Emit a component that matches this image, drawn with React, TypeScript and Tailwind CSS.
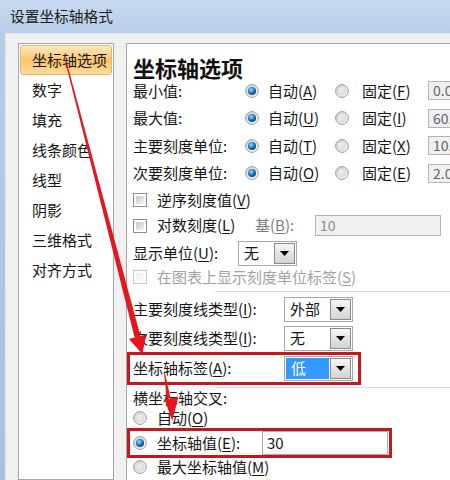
import type { ReactNode } from 'react';

const U = ({ children }: { children: ReactNode }) => (
  <span className="underline underline-offset-[2px] decoration-1">{children}</span>
);

const Key = ({ text, k, colon }: { text: string; k: string; colon?: boolean }) => (
  <span>
    {text}(<U>{k}</U>){colon ? ':' : ''}
  </span>
);

function Radio({ on }: { on?: boolean }) {
  return (
    <svg width="14" height="14" viewBox="0 0 14 14" className="shrink-0">
      <defs>
        <linearGradient id="rg-off" x1="0" y1="0" x2="1" y2="1">
          <stop offset="0" stopColor="#cfcfcf" />
          <stop offset="1" stopColor="#fbfbfb" />
        </linearGradient>
        <linearGradient id="rg-in" x1="0" y1="0" x2="1" y2="1">
          <stop offset="0" stopColor="#f4f4f4" />
          <stop offset="1" stopColor="#dadada" />
        </linearGradient>
        <radialGradient id="rg-ball" cx="0.4" cy="0.35" r="0.7">
          <stop offset="0" stopColor="#a6e0ff" />
          <stop offset="0.45" stopColor="#2b8ad0" />
          <stop offset="1" stopColor="#0a3563" />
        </radialGradient>
      </defs>
      <circle cx="7" cy="7" r="6.4" fill="url(#rg-off)" stroke="#9b9b9b" strokeWidth="1" />
      {on ? (
        <circle cx="7" cy="7" r="4" fill="url(#rg-ball)" />
      ) : (
        <circle cx="7" cy="7" r="4" fill="url(#rg-in)" stroke="#d2d2d2" strokeWidth="0.6" />
      )}
    </svg>
  );
}

function Check({ off }: { off?: boolean }) {
  return (
    <div
      className={
        off
          ? 'w-[14px] h-[14px] shrink-0 border border-[#c9c9c9] bg-white p-[2px]'
          : 'w-[14px] h-[14px] shrink-0 border border-[#8e8f8f] bg-white p-[2px]'
      }
    >
      <div
        className={
          off
            ? 'w-full h-full bg-gradient-to-br from-[#ececec] to-[#fafafa]'
            : 'w-full h-full bg-gradient-to-br from-[#c9c9c9] to-[#f3f3f3]'
        }
      />
    </div>
  );
}

function Drop({ text, hi, wide }: { text: string; hi?: boolean; wide?: boolean }) {
  return (
    <div
      className={
        (wide ? 'w-[69px]' : 'w-[59px]') +
        ' h-[25px] shrink-0 flex border border-[#a4a8ad] bg-white'
      }
    >
      <div
        className={
          hi
            ? 'flex-1 m-[1px] mr-0 bg-[#3399ff] text-white pl-[5px] flex items-center'
            : 'flex-1 pl-[5px] flex items-center'
        }
      >
        {text}
      </div>
      <div className="w-[21px] m-[1px] border border-[#8a8a8a] bg-gradient-to-b from-[#f7f7f7] to-[#d2d2d2] flex items-center justify-center">
        <svg width="9" height="5" viewBox="0 0 9 5">
          <polygon points="0,0 9,0 4.5,5" fill="#000" />
        </svg>
      </div>
    </div>
  );
}

const NAV = ['坐标轴选项', '数字', '填充', '线条颜色', '线型', '阴影', '三维格式', '对齐方式'];

const ROWS = [
  { label: '最小值:', a: 'A', f: 'F', v: '0.0' },
  { label: '最大值:', a: 'U', f: 'I', v: '60.' },
  { label: '主要刻度单位:', a: 'T', f: 'X', v: '10.' },
  { label: '次要刻度单位:', a: 'O', f: 'E', v: '2.0' },
];

export default function App() {
  return (
    <div className="relative w-[450px] h-[480px] overflow-hidden bg-[#f0f0f0] text-[15px] text-[#151515] font-['Noto_Sans_CJK_SC','Noto_Sans',sans-serif]">
      {/* title bar */}
      <div className="h-[33px] pl-[10px] flex items-center bg-gradient-to-b from-[#c6d9ef] to-[#b9cfe9] text-[14.7px] text-[#1b1b1b]">
        设置坐标轴格式
      </div>

      <div className="flex h-[447px]">
        <div className="w-[5px] shrink-0 bg-gradient-to-b from-[#b7cce6] to-[#a9c1df]" />
        <div className="flex-1 flex border-l border-t border-[#e2e8ef] pt-[9px]">
          {/* left list */}
          <div className="ml-[12px] w-[96px] shrink-0 border border-[#a3a7ab] bg-white p-[1px]">
            {NAV.map((n, i) => (
              <div
                key={n}
                className={
                  i === 0
                    ? 'h-[30px] pl-[11px] flex items-center rounded-[3px] border border-[#e6b66c] bg-gradient-to-b from-[#fde9bd] via-[#fbc56c] to-[#fddc98]'
                    : 'h-[30px] pl-[12px] flex items-center'
                }
              >
                {n}
              </div>
            ))}
          </div>

          {/* right panel */}
          <div className="ml-[12px] flex-1 min-w-0 border-l border-t border-[#a3a7ab] bg-white pl-[6px] pt-[13px] flex flex-col">
            <div className="h-[20px] leading-[20px] text-[22px] font-semibold text-[#111]">坐标轴选项</div>

            {ROWS.map((r) => (
              <div key={r.label} className="h-[27.5px] flex items-center shrink-0">
                <div className="w-[112px] shrink-0">{r.label}</div>
                <div className="w-[90px] shrink-0 flex items-center">
                  <Radio on />
                  <span className="ml-[9px]">
                    <Key text="自动" k={r.a} />
                  </span>
                </div>
                <div className="w-[93px] shrink-0 flex items-center">
                  <Radio />
                  <span className="ml-[13px]">
                    <Key text="固定" k={r.f} />
                  </span>
                </div>
                <div className="w-[60px] h-[19px] shrink-0 border border-[#b2b5b8] bg-[#f0f0f0] pl-[4px] text-[14px] text-[#5b6670] flex items-center">
                  {r.v}
                </div>
              </div>
            ))}

            <div className="h-[26px] flex items-center shrink-0">
              <Check />
              <span className="ml-[10px]">
                <Key text="逆序刻度值" k="V" />
              </span>
            </div>

            <div className="h-[25px] flex items-center shrink-0">
              <Check />
              <span className="ml-[10px] w-[98px] shrink-0">
                <Key text="对数刻度" k="L" />
              </span>
              <span className="w-[60px] shrink-0 text-[#7c7c7c]">
                <Key text="基" k="B" colon />
              </span>
              <div className="w-[126px] h-[21px] shrink-0 border border-[#b2b5b8] bg-[#f0f0f0] pl-[4px] text-[14px] text-[#8a8a8a] flex items-center">
                10
              </div>
            </div>

            <div className="h-[30px] flex items-center shrink-0">
              <span className="w-[105px] shrink-0">
                <Key text="显示单位" k="U" colon />
              </span>
              <Drop text="无" />
            </div>

            <div className="h-[18px] flex items-center shrink-0 text-[#a2a2a2]">
              <Check off />
              <span className="ml-[10px]">
                <Key text="在图表上显示刻度单位标签" k="S" />
              </span>
            </div>

            <div className="mt-[5px] h-px ml-[82px] bg-[#d6dde3] shrink-0" />

            <div className="mt-[2px] h-[30px] flex items-center shrink-0">
              <span className="w-[151px] shrink-0">
                <Key text="主要刻度线类型" k="I" colon />
              </span>
              <Drop text="外部" wide />
            </div>

            <div className="h-[28px] flex items-center shrink-0">
              <span className="w-[151px] shrink-0">
                <Key text="次要刻度线类型" k="I" colon />
              </span>
              <Drop text="无" wide />
            </div>

            <div className="-ml-[6px] w-[234px] h-[33px] border-[3px] border-[#c8161d] pl-[3px] flex items-center shrink-0">
              <span className="w-[151px] shrink-0">
                <Key text="坐标轴标签" k="A" colon />
              </span>
              <Drop text="低" wide hi />
            </div>

            <div className="mt-[2px] h-px ml-[82px] bg-[#d6dde3] shrink-0" />

            <div className="h-[20px] flex items-center shrink-0">横坐标轴交叉:</div>

            <div className="h-[20px] flex items-center shrink-0">
              <Radio />
              <span className="ml-[10px]">
                <Key text="自动" k="O" />
              </span>
            </div>

            <div className="-ml-[6px] w-[265px] h-[30px] border-[3px] border-[#c8161d] pl-[3px] flex items-center shrink-0">
              <Radio on />
              <span className="ml-[10px] w-[105px] shrink-0">
                <Key text="坐标轴值" k="E" colon />
              </span>
              <div className="w-[126px] h-[24px] shrink-0 border border-[#a9acaf] bg-white pl-[4px] flex items-center">
                30
              </div>
            </div>

            <div className="h-[18px] flex items-center shrink-0">
              <Radio />
              <span className="ml-[10px]">
                <Key text="最大坐标轴值" k="M" />
              </span>
            </div>
          </div>
        </div>
      </div>

      {/* red annotation arrows */}
      <svg className="absolute left-0 top-0 pointer-events-none" width="450" height="480" viewBox="0 0 450 480">
        <polygon points="66.6,61.8 65.4,62.2 134.6,337.4 140.4,335.9" fill="#e5161d" />
        <polygon points="128.9,339.1 146.3,334.6 142.3,354" fill="#e5161d" />
        <polygon points="164.9,373 164.1,373.1 166.6,398.3 170.4,397.7" fill="#e5161d" />
        <polygon points="164.6,399.2 178.4,397 172.2,421" fill="#e5161d" />
      </svg>
    </div>
  );
}
